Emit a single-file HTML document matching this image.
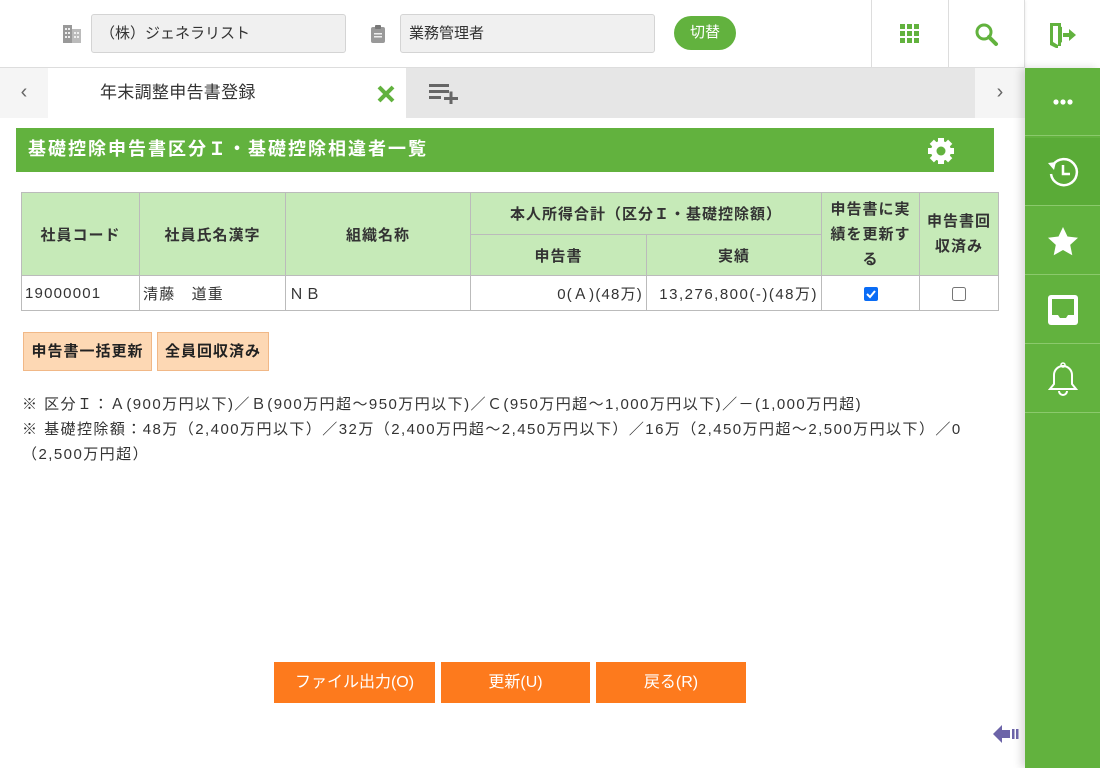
<!DOCTYPE html>
<html><head><meta charset="utf-8"><style>
*{box-sizing:border-box;margin:0;padding:0}
body{width:1100px;height:768px;overflow:hidden;background:#fff;font-family:"Liberation Sans","Noto Sans CJK JP",sans-serif;color:#333;position:relative;font-size:15px}
.abs{position:absolute}
.inp{position:absolute;top:14px;height:39px;background:#f0f0f0;border:1px solid #d4d4d4;border-radius:3px;font-size:15px;line-height:37px;padding-left:8px;color:#333}
.vsep{position:absolute;top:0;height:68px;width:1px;background:#ddd}
.side{position:absolute;left:1025px;width:75px;height:68px;border-bottom:1px solid #8bc96c;display:flex;align-items:center;justify-content:center}
table{border-collapse:collapse;position:absolute;left:21px;top:192px;width:977px;font-size:15px;table-layout:fixed}
th{background:#c6eab8;border:1px solid #bbb;font-weight:bold;color:#333;font-size:15px;letter-spacing:1px;overflow:hidden}
td{border:1px solid #bbb;height:35px;padding:0 3px;letter-spacing:1.2px;overflow:hidden;white-space:nowrap}
.ob{position:absolute;top:332px;height:39px;background:#fdd8b4;border:1px solid #f1b887;font-weight:bold;font-size:15px;line-height:37px;text-align:center;color:#222;letter-spacing:1px}
.bb{position:absolute;top:662px;height:41px;background:#fd7a1d;color:#fff;font-size:16px;line-height:41px;text-align:center}
.note{position:absolute;left:22px;font-size:15px;color:#333;letter-spacing:1.45px;white-space:nowrap}
</style></head><body>
<div class="abs" style="left:0;top:0;width:1025px;height:68px;border-bottom:1px solid #ddd;box-shadow:0 1px 3px rgba(0,0,0,.1)"></div>
<svg class="abs" style="left:63px;top:24px" width="18" height="19"><rect x="0" y="1" width="9" height="18" fill="#999"/><rect x="9" y="5" width="9" height="14" fill="#bbb"/><g fill="#eee"><rect x="2" y="4" width="2" height="2"/><rect x="5" y="4" width="2" height="2"/><rect x="2" y="8" width="2" height="2"/><rect x="5" y="8" width="2" height="2"/><rect x="2" y="12" width="2" height="2"/><rect x="5" y="12" width="2" height="2"/><rect x="11" y="8" width="2" height="2"/><rect x="14" y="8" width="2" height="2"/><rect x="11" y="12" width="2" height="2"/><rect x="14" y="12" width="2" height="2"/></g></svg>
<div class="inp" style="left:91px;width:255px">（株）ジェネラリスト</div>
<svg class="abs" style="left:371px;top:25px" width="14" height="18"><rect x="0" y="2" width="14" height="16" rx="2" fill="#999"/><rect x="4" y="0" width="6" height="4" rx="1" fill="#777"/><rect x="3" y="8" width="8" height="1.5" fill="#eee"/><rect x="3" y="11" width="8" height="1.5" fill="#eee"/></svg>
<div class="inp" style="left:400px;width:255px">業務管理者</div>
<div class="abs" style="left:674px;top:16px;width:62px;height:34px;border-radius:17px;background:#62b23e;color:#fff;font-size:15px;line-height:34px;text-align:center">切替</div>
<div class="vsep" style="left:871px"></div><div class="vsep" style="left:948px"></div><div class="vsep" style="left:1024px"></div>
<svg class="abs" style="left:900px;top:24px" width="20" height="20" fill="#62b23e"><rect x="0" y="0" width="5" height="5"/><rect x="7" y="0" width="5" height="5"/><rect x="14" y="0" width="5" height="5"/><rect x="0" y="7" width="5" height="5"/><rect x="7" y="7" width="5" height="5"/><rect x="14" y="7" width="5" height="5"/><rect x="0" y="14" width="5" height="5"/><rect x="7" y="14" width="5" height="5"/><rect x="14" y="14" width="5" height="5"/></svg>
<svg class="abs" style="left:975px;top:23px" width="24" height="24"><circle cx="9" cy="9" r="7" stroke="#62b23e" stroke-width="3" fill="none"/><line x1="14" y1="14" x2="21" y2="21" stroke="#62b23e" stroke-width="4" stroke-linecap="round"/></svg>
<svg class="abs" style="left:1049px;top:22px" width="28" height="26" fill="#62b23e"><path d="M1 1h11v5h-3v-2H4v16l5 3v-4h3v5H9v3L1 23z"/><path d="M9 4l4 1v15l-4 3z"/><path d="M14 11h6V7l7 6-7 6v-4h-6z"/></svg>
<div class="abs" style="left:0;top:68px;width:48px;height:50px;background:#f5f5f5;color:#666;font-size:20px;line-height:48px;text-align:center">&lsaquo;</div>
<div class="abs" style="left:48px;top:68px;width:358px;height:50px;background:#fff;font-size:17px;line-height:50px;padding-left:52px;color:#333;letter-spacing:.3px">年末調整申告書登録</div>
<svg class="abs" style="left:377px;top:85px" width="18" height="18"><path d="M2 2L16 16M16 2L2 16" stroke="#62b23e" stroke-width="4"/></svg>
<div class="abs" style="left:406px;top:68px;width:569px;height:50px;background:#e6e6e6"></div>
<svg class="abs" style="left:429px;top:84px" width="32" height="20" fill="#666"><rect x="0" y="0" width="20" height="3"/><rect x="0" y="6" width="20" height="3"/><rect x="0" y="12" width="12" height="3"/><rect x="15" y="13" width="14" height="3"/><rect x="20.5" y="7.5" width="3" height="14"/></svg>
<div class="abs" style="left:975px;top:68px;width:50px;height:50px;background:#f5f5f5;color:#666;font-size:20px;line-height:48px;text-align:center">&rsaquo;</div>
<div class="abs" style="left:1025px;top:68px;width:75px;height:700px;background:#62b23e;box-shadow:-4px 0 8px rgba(0,0,0,.15)"></div>
<div class="side" style="top:68px"><svg width="20" height="6" fill="#fff"><circle cx="3" cy="3" r="2.6"/><circle cx="10" cy="3" r="2.6"/><circle cx="17" cy="3" r="2.6"/></svg></div>
<div class="side" style="top:138px;background:#5aab37"><svg width="34" height="34"><path d="M7 10A13 13 0 1 1 5 19" stroke="#fff" stroke-width="2.5" fill="none"/><path d="M2 8l8 -1-2 8z" fill="#fff"/><path d="M17 10v9h7" stroke="#fff" stroke-width="2.5" fill="none"/></svg></div>
<div class="side" style="top:207px"><svg width="32" height="30"><path d="M16 1l4.5 9.5 10.5 1.2-7.8 7.2 2.1 10.4L16 24l-9.3 5.3 2.1-10.4L1 11.7l10.5-1.2z" fill="#fff"/></svg></div>
<div class="side" style="top:276px"><svg width="32" height="32"><rect x="1" y="1" width="30" height="30" rx="3" fill="#fff"/><path d="M5 5h22v16h-6l-2 3h-6l-2-3H5z" fill="#62b23e"/></svg></div>
<div class="side" style="top:345px"><svg width="30" height="34"><path d="M15 4a9 9 0 0 0-9 9v9l-4 5h26l-4-5v-9a9 9 0 0 0-9-9z" stroke="#fff" stroke-width="2" fill="none"/><circle cx="15" cy="3" r="2" stroke="#fff" stroke-width="1.5" fill="none"/><path d="M11 29a4 4 0 0 0 8 0" stroke="#fff" stroke-width="2" fill="none"/></svg></div>
<div class="abs" style="left:16px;top:128px;width:978px;height:44px;background:#62b23e;color:#fff;font-weight:bold;font-size:18px;line-height:42px;padding-left:12px;letter-spacing:2px">基礎控除申告書区分Ｉ・基礎控除相違者一覧</div>
<svg class="abs" style="left:926px;top:136px" width="30" height="30" viewBox="0 0 30 30"><g fill="#fff"><circle cx="15" cy="15" r="10"/><g stroke="#fff" stroke-width="6"><line x1="15" y1="2" x2="15" y2="28"/><line x1="2" y1="15" x2="28" y2="15"/><line x1="5.8" y1="5.8" x2="24.2" y2="24.2"/><line x1="24.2" y1="5.8" x2="5.8" y2="24.2"/></g></g><circle cx="15" cy="15" r="4.5" fill="#62b23e"/></svg>
<table>
<colgroup><col style="width:118px"><col style="width:146px"><col style="width:185px"><col style="width:176px"><col style="width:175px"><col style="width:98px"><col style="width:79px"></colgroup>
<tr style="height:42px"><th rowspan="2">社員コード</th><th rowspan="2">社員氏名漢字</th><th rowspan="2">組織名称</th><th colspan="2">本人所得合計（区分Ｉ・基礎控除額）</th><th rowspan="2" style="line-height:25px;padding:0 8px">申告書に実績を更新する</th><th rowspan="2" style="line-height:25px;padding:0 7px">申告書回収済み</th></tr>
<tr style="height:41px"><th>申告書</th><th>実績</th></tr>
<tr><td>19000001</td><td>清藤　道重</td><td>ＮＢ</td><td style="text-align:right">0(Ａ)(48万)</td><td style="text-align:right;letter-spacing:1.5px">13,276,800(-)(48万)</td><td style="text-align:center"><svg width="14" height="14" style="vertical-align:middle"><rect width="14" height="14" rx="2" fill="#0a6cf5"/><path d="M3 7l3 3 5-6" stroke="#fff" stroke-width="2" fill="none"/></svg></td><td style="text-align:center"><svg width="14" height="14" style="vertical-align:middle"><rect x=".5" y=".5" width="13" height="13" rx="2" fill="#fff" stroke="#767676"/></svg></td></tr>
</table>
<div class="ob" style="left:23px;width:129px">申告書一括更新</div>
<div class="ob" style="left:157px;width:112px">全員回収済み</div>
<div class="note" style="top:393px">※ 区分Ｉ：Ａ(900万円以下)／Ｂ(900万円超～950万円以下)／Ｃ(950万円超～1,000万円以下)／－(1,000万円超)</div>
<div class="note" style="top:418px">※ 基礎控除額：48万（2,400万円以下）／32万（2,400万円超～2,450万円以下）／16万（2,450万円超～2,500万円以下）／0</div>
<div class="note" style="top:443px">（2,500万円超）</div>
<div class="bb" style="left:274px;width:161px">ファイル出力(O)</div>
<div class="bb" style="left:441px;width:149px">更新(U)</div>
<div class="bb" style="left:596px;width:150px">戻る(R)</div>
<svg class="abs" style="left:993px;top:722px" width="32" height="24"><path d="M0 12l9-9v5h8v8H9v5z" fill="#6c64a8"/><rect x="19" y="7" width="2.5" height="10" fill="#6c64a8"/><rect x="23" y="7" width="2.5" height="10" fill="#6c64a8"/></svg>
</body></html>
